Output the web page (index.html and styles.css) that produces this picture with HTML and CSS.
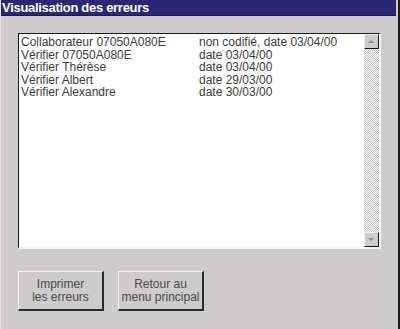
FILE: index.html
```html
<!DOCTYPE html>
<html>
    <head>
        <title>Visualisation des erreurs</title>
        <meta charset="utf-8" />
        <link rel="stylesheet" href="styles.css">
    </head>
    <body>
        <div class="window">
            <div class="titlebar">Visualisation des erreurs</div>
            <div class="content">
                <div class="listbox">
                    <ul class="rows">
                        <li><span class="who">Collaborateur 07050A080E</span><span class="when">non codifié, date 03/04/00</span></li>
                        <li><span class="who">Vérifier 07050A080E</span><span class="when">date 03/04/00</span></li>
                        <li><span class="who">Vérifier Thérèse</span><span class="when">date 03/04/00</span></li>
                        <li><span class="who">Vérifier Albert</span><span class="when">date 29/03/00</span></li>
                        <li><span class="who">Vérifier Alexandre</span><span class="when">date 30/03/00</span></li>
                    </ul>
                    <div class="scrollbar">
                        <div class="arrow arrow-up"></div>
                        <div class="track"></div>
                        <div class="arrow arrow-down"></div>
                    </div>
                </div>
                <div class="actions">
                    <button type="button">Imprimer<br>les erreurs</button>
                    <button type="button">Retour au<br>menu principal</button>
                </div>
            </div>
        </div>
    </body>
</html>
```
FILE: styles.css
```css
body {
    margin: 0;
    font-family: "Liberation Sans", Arial, sans-serif;
    background: #cdcbcb;
}

.window {
    width: 400px;
    height: 329px;
    box-sizing: border-box;
    background: #cdcbcb;
    border-left: 1px solid #e4e2e2;
    border-right: 2px solid #1c1c1c;
}

.titlebar {
    height: 15px;
    margin-right: 2px;
    padding-left: 1px;
    background: #2d2674;
    border-bottom: 1px solid #1e1850;
    color: #ffffff;
    font-weight: bold;
    font-size: 13px;
    letter-spacing: -0.3px;
    line-height: 15px;
}

.content {
    padding: 17px 0 0 17px;
}

/* sunken list */
.listbox {
    display: flex;
    width: 363px;
    height: 216px;
    box-sizing: border-box;
    background: #ffffff;
    border-top: 1px solid #1a1a1a;
    border-left: 1px solid #1a1a1a;
    border-right: 2px solid #f4f4f4;
    border-bottom: 2px solid #f4f4f4;
}

.rows {
    flex: 1;
    list-style: none;
    margin: 0;
    padding: 2px 0 0 2px;
    color: #3c3c3c;
    font-size: 12px;
    line-height: 12.5px;
}

.rows li {
    display: flex;
}

.who {
    width: 178px;
}

.scrollbar {
    width: 15px;
    display: flex;
    flex-direction: column;
}

.track {
    flex: 1;
    background: repeating-conic-gradient(#c4c4c4 0 25%, #ffffff 0 50%) 0 0 / 2px 2px;
}

.arrow {
    height: 15px;
    box-sizing: border-box;
    background: #cdcbcb;
    border-top: 1px solid #f0f0f0;
    border-left: 1px solid #f0f0f0;
    border-right: 1px solid #1a1a1a;
    border-bottom: 1px solid #1a1a1a;
    position: relative;
}

.arrow::after {
    content: "";
    position: absolute;
    left: 3px;
    width: 0;
    height: 0;
    border-left: 3.5px solid transparent;
    border-right: 3.5px solid transparent;
}

.arrow-up::after {
    top: 5px;
    border-bottom: 3px solid #8a8a8a;
}

.arrow-down::after {
    top: 5px;
    border-top: 3px solid #8a8a8a;
}

.actions {
    display: flex;
    gap: 14px;
    margin-top: 22px;
}

.actions button {
    width: 86px;
    height: 40px;
    padding: 0;
    background: #cdcbcb;
    border-top: 1px solid #f2f2f2;
    border-left: 1px solid #f2f2f2;
    border-right: 2px solid #2a2a2a;
    border-bottom: 2px solid #2a2a2a;
    font-family: "Liberation Sans", Arial, sans-serif;
    font-size: 12px;
    line-height: 13px;
    color: #4a4a4a;
}
```
